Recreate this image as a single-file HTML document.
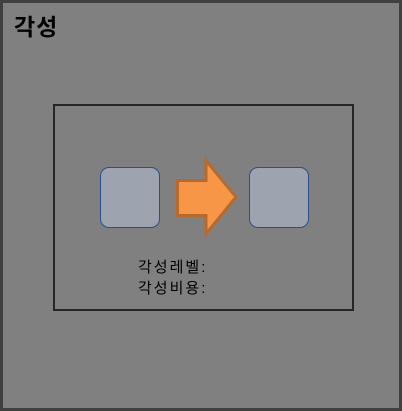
<!DOCTYPE html>
<html><head><meta charset="utf-8"><style>
body{margin:0;width:402px;height:411px;overflow:hidden;background:#808080;font-family:"Liberation Sans","Noto Sans CJK KR",sans-serif}
#o{position:absolute;left:0;top:0;width:396px;height:405px;border:3px solid #404040;background:#808080}
#t{position:absolute;left:14px;top:13px;font-size:23px;font-weight:bold;color:#000;line-height:28px;letter-spacing:1px}
#b{position:absolute;left:53px;top:104px;width:297px;height:203px;border:2px solid #262626}
.s{position:absolute;top:167px;width:58px;height:59px;background:#9ea4af;border:1.5px solid #2a5088;border-radius:9px}
.l{position:absolute;left:138px;font-size:15px;color:#000;letter-spacing:2px;line-height:16px}
</style></head><body>
<div id="o"></div>
<div id="t">각성</div>
<div id="b"></div>
<div class="s" style="left:100px"></div>
<div class="s" style="left:249px"></div>
<svg style="position:absolute;left:0;top:0" width="402" height="411">
<path d="M177.5 180.5 H206 V160.5 L236 197 L206 234 V215.5 H177.5 Z" fill="#f79646" stroke="#b76a2e" stroke-width="3" stroke-linejoin="miter"/>
</svg>
<div class="l" style="top:260px">각성레벨:</div>
<div class="l" style="top:281px">각성비용:</div>
</body></html>
